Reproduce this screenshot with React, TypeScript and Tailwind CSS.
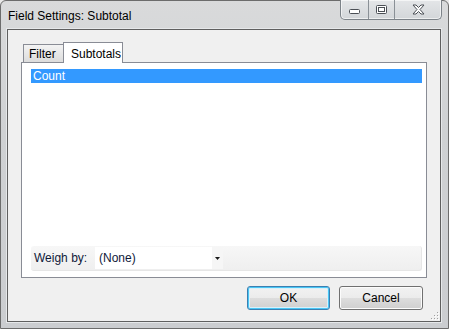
import React from 'react';

const font = { fontFamily: '"Liberation Sans", Arial, sans-serif' };

const CaptionButtons: React.FC = () => (
  <div className="-mt-px mr-[6px] flex h-[20px] overflow-hidden rounded-b-[5px] border border-t-0 border-[#7d8389] bg-gradient-to-b from-[#e4e6e8] to-[#d3d6d9] shadow-[inset_0_0_0_1px_rgba(255,255,255,0.6)]">
    <div className="flex w-[28px] items-center justify-center border-r border-[#8a9096] pt-[4px]">
      <svg width="11" height="5" viewBox="0 0 11 5">
        <rect x="0.5" y="0.5" width="10" height="4" rx="1" fill="#fff" stroke="#4b4f55" />
      </svg>
    </div>
    <div className="flex w-[26px] items-center justify-center border-r border-[#8a9096]">
      <svg width="11" height="9" viewBox="0 0 11 9">
        <rect x="0.5" y="0.5" width="10" height="8" rx="1" fill="#fff" stroke="#4b4f55" />
        <rect x="2.5" y="2.5" width="6" height="4" fill="none" stroke="#4b4f55" />
      </svg>
    </div>
    <div className="flex w-[46px] items-center justify-center">
      <svg width="13" height="11" viewBox="0 0 13 11">
        <path
          d="M1 1 H4 L6.5 3.5 L9 1 H12 L8 5.5 L12 10 H9 L6.5 7.5 L4 10 H1 L5 5.5 Z"
          fill="#fff"
          stroke="#4b4f55"
          strokeLinejoin="round"
        />
      </svg>
    </div>
  </div>
);

const DialogButton: React.FC<{ label: string; primary?: boolean; width: string }> = ({ label, primary, width }) => (
  <div
    className={`${width} flex h-[24px] items-center justify-center rounded-[3px] border bg-[linear-gradient(to_bottom,#f2f2f2_0%,#ebebeb_50%,#dddddd_51%,#cfcfcf_100%)] text-[12px] text-black ${
      primary
        ? 'border-[#3c7fb1] shadow-[inset_0_0_0_1px_#48c6f5,inset_0_0_0_2px_#d8f0fa]'
        : 'border-[#707070] shadow-[inset_0_0_0_1px_#fcfcfc]'
    }`}
  >
    {label}
  </div>
);

export default function App() {
  return (
    <div style={font} className="h-[329px] w-[449px] overflow-hidden bg-[#e8e8e8]">
      <div className="flex h-[329px] w-[449px] flex-col rounded-t-[6px] border border-[#6c6c6c] bg-[linear-gradient(to_bottom,#d9dadb,#cfd1d3_40%,#cbcdd0)]">
        {/* title bar */}
        <div className="flex h-[28px] items-start">
          <div className="pl-[7px] pt-[8px] text-[12px] leading-[15px] text-black">Field Settings: Subtotal</div>
          <div className="ml-auto">
            <CaptionButtons />
          </div>
        </div>

        {/* client area */}
        <div className="ml-[6px] mr-[7px] flex h-[293px] flex-col border border-[#5f5f5f] bg-[#f0f0f0] shadow-[0_0_0_1px_#e6e8ea]">
          <div className="ml-[13px] mt-[12px] flex flex-col">
            {/* tabs */}
            <div className="flex h-[20px] items-end pl-[2px]">
              <div className="flex h-[18px] w-[40px] items-center border-l border-t border-[#898c95] bg-gradient-to-b from-[#f3f3f3] to-[#dcdcdc] pl-[5px] text-[12px] text-black">
                Filter
              </div>
              <div className="relative z-10 -mb-px flex h-[21px] w-[60px] items-start border border-b-0 border-[#898c95] bg-white pl-[7px] pt-[2px] text-[12px] text-black">
                Subtotals
              </div>
            </div>
            {/* panel */}
            <div className="flex h-[216px] w-[406px] flex-col border border-[#898c95] bg-white">
              <div className="ml-[9px] mr-[4px] mt-[6px] flex h-[14px] items-center bg-[#3399ff] pl-[2px] text-[12px] text-white">
                Count
              </div>
              <div className="flex-1" />
              <div className="mb-[6px] ml-[9px] mr-[4px] flex h-[25px] items-center rounded-[3px] border-b border-r border-[#e6e6e6] bg-gradient-to-b from-[#f7f7f7] to-[#efefef]">
                <div className="w-[64px] pl-[3px] text-[12px] text-[#101a3a]">Weigh by:</div>
                <div className="flex h-[22px] w-[128px] items-center bg-white">
                  <span className="flex-1 pl-[4px] text-[12px] text-[#101a3a]">(None)</span>
                  <div className="flex h-[22px] w-[11px] items-center justify-center bg-[#f6f6f6]">
                    <svg width="5" height="3" viewBox="0 0 5 3">
                      <path d="M0 0 H5 L2.5 3 Z" fill="#1a1a1a" />
                    </svg>
                  </div>
                </div>
              </div>
            </div>
          </div>

          {/* buttons */}
          <div className="mr-[17px] mt-[8px] flex justify-end gap-[9px]">
            <DialogButton label="OK" primary width="w-[83px]" />
            <DialogButton label="Cancel" width="w-[84px]" />
          </div>

          {/* size grip */}
          <div className="mt-auto flex justify-end pb-[1px] pr-[1px]">
            <svg width="9" height="9" viewBox="0 0 9 9">
              {[
                [7, 1],
                [4, 4],
                [7, 4],
                [1, 7],
                [4, 7],
                [7, 7],
              ].map(([x, y]) => (
                <g key={`${x}-${y}`}>
                  <rect x={x + 1} y={y + 1} width="1" height="1" fill="#ffffff" />
                  <rect x={x} y={y} width="1" height="1" fill="#a0a0a0" />
                </g>
              ))}
            </svg>
          </div>
        </div>
      </div>
    </div>
  );
}
